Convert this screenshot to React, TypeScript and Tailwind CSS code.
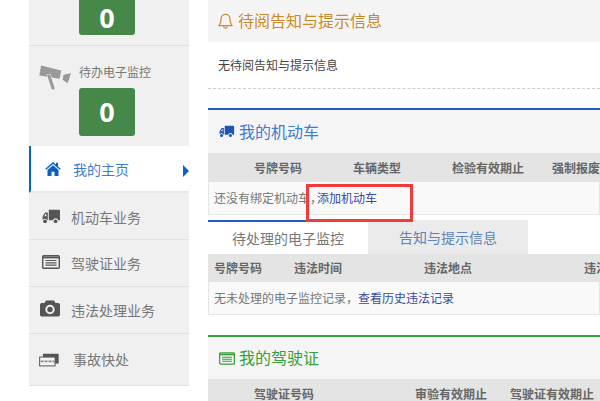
import React from "react";

const font = { fontFamily: '"Microsoft YaHei","Noto Sans CJK SC","Liberation Sans",sans-serif' };

function Truck({ className }: { className?: string }) {
  return (
    <svg viewBox="22 25 56 44" className={className} fill="currentColor">
      <path d="M42 27h30a3 3 0 0 1 3 3v28h-5a8.500 8.500 0 0 0-16 0H42z" />
      <path fillRule="evenodd" d="M39 35v23h-1a8 8 0 0 0-14-1V46l7-11zM28.500 46h6v-7h-2z" />
      <circle cx="31" cy="61" r="5.500" />
      <circle cx="62" cy="61" r="5.500" />
    </svg>
  );
}

function Card({ className }: { className?: string }) {
  return (
    <svg viewBox="0 0 18 14" className={className} fill="none" stroke="currentColor">
      <rect x="0.700" y="0.700" width="16.600" height="12.600" rx="1" strokeWidth="1.400" />
      <path d="M0.700 2.500h16.600" strokeWidth="1.800" />
      <path d="M3.500 5.500h11M3.500 7.800h11M3.500 10.100h11" strokeWidth="1.200" />
    </svg>
  );
}

function Home({ className }: { className?: string }) {
  return (
    <svg viewBox="0 0 16 14" className={className} fill="currentColor">
      <path d="M8 0 .3 6.800l.9 1L8 1.900l6.800 5.900.9-1L13 4.400V.8h-2v1.900z" />
      <path d="M8 3.300 2.500 8v6H6.500V9.800h3V14h4V8z" />
    </svg>
  );
}

function Camera({ className }: { className?: string }) {
  return (
    <svg viewBox="0 0 20 16" className={className} fill="currentColor">
      <path fillRule="evenodd" d="M6 0h8l1.500 2.500h2.700A1.800 1.800 0 0 1 20 4.300v9.900a1.800 1.800 0 0 1-1.800 1.800H1.800A1.800 1.800 0 0 1 0 14.200V4.300a1.800 1.800 0 0 1 1.800-1.800h2.700zm4 4.300a4.700 4.700 0 1 0 0 9.400 4.700 4.700 0 0 0 0-9.400z" />
      <circle cx="10" cy="9" r="2.700" />
    </svg>
  );
}

function Accident({ className }: { className?: string }) {
  return (
    <svg viewBox="12 26 61 40" className={className}>
      <rect x="24" y="27" width="48" height="30" fill="currentColor" />
      <rect x="14" y="37" width="47" height="27" fill="#f4f4f4" stroke="currentColor" strokeWidth="3" />
      <path d="M17 50h41" stroke="#888" strokeWidth="5" strokeDasharray="9 3" fill="none" />
    </svg>
  );
}

function Cctv({ className }: { className?: string }) {
  return (
    <svg viewBox="24 28 104 80" className={className} fill="currentColor">
      <path d="M33 32 93 47 88 72 28 62z" />
      <path d="M60 58 51 60 65 104 74 102z" stroke="#f0f0f0" strokeWidth="3" paintOrder="stroke" />
      <path d="M100 60 122 55 112 85 97 75z" />
    </svg>
  );
}

function Bell({ className }: { className?: string }) {
  return (
    <svg viewBox="0 0 16 17" className={className} fill="none" stroke="currentColor" strokeWidth="1.300">
      <path d="M8 1.500a4.700 4.700 0 0 0-4.700 4.700c0 4.300-1.800 6-2.300 7.300h14c-.5-1.300-2.300-3-2.300-7.300A4.700 4.700 0 0 0 8 1.500z" />
      <path d="M6 14a2 2 0 0 0 4 0" />
    </svg>
  );
}

function Sidebar() {
  return (
    <aside className="w-[160px] shrink-0 bg-[#f0f0f0] text-[#777] text-[14px]">
      <div className="h-[46px] border-b border-[#e0e0e0] pl-[50px]">
        <div className="w-[56px] h-[35px] bg-[#46874a] rounded-b-[3px] flex items-end justify-center text-white text-[27px] font-bold leading-[35px]" style={{ fontFamily: '"Open Sans",sans-serif' }}>
          0
        </div>
      </div>
      <div className="h-[100px]">
        <div className="flex h-[42px] pl-[9px] pt-[18px]">
          <Cctv className="w-[35px] h-[27px] text-[#999] shrink-0" />
          <span className="ml-[6px] mt-[1px] text-[12px] leading-[14px]">待办电子监控</span>
        </div>
        <div className="ml-[50px] w-[56px] h-[48px] bg-[#46874a] rounded-[3px] flex items-center justify-center text-white text-[27px] font-bold" style={{ fontFamily: '"Open Sans",sans-serif' }}>
          0
        </div>
      </div>
      <div className="h-[47px] bg-white border-l-2 border-[#0b63c9] border-b-2 border-b-[#e8e8e8] flex items-center pl-[14px] relative text-[#3e7cd0]">
        <Home className="w-[16px] h-[14px] text-[#0b5fc4]" />
        <span className="ml-[12px] mt-[2px]">我的主页</span>
        <span className="absolute right-0 top-[19px] w-0 h-0 border-y-[6px] border-y-transparent border-l-[6px] border-l-[#0b63c9]" />
      </div>
      <div className="h-[47px] pl-[13px] border-b border-[#e0e0e0] flex items-center">
        <Truck className="w-[19px] h-[15px] text-[#555]" />
        <span className="ml-[10px] mt-[2px]">机动车业务</span>
      </div>
      <div className="h-[47px] pl-[13px] border-b border-[#e0e0e0] flex items-center">
        <Card className="w-[18px] h-[14px] text-[#555] -mt-[3px]" />
        <span className="ml-[11px] mt-[1px]">驾驶证业务</span>
      </div>
      <div className="h-[47px] pl-[11px] border-b border-[#e0e0e0] flex items-center">
        <Camera className="w-[20px] h-[17px] text-[#555] -mt-[4px]" />
        <span className="ml-[11px] mt-[1px]">违法处理业务</span>
      </div>
      <div className="h-[52px] pl-[10px] border-b border-[#e0e0e0] flex items-center">
        <Accident className="w-[20px] h-[14px] text-[#555]" />
        <span className="ml-[14px]">事故快处</span>
      </div>
    </aside>
  );
}

function Main() {
  return (
    <main className="ml-[19px] flex-1 min-w-0 text-[12px] text-[#555]">
      <div className="h-[42px] bg-[#f4f4f4] flex items-center pl-[10px] text-[16px] text-[#c98a2b]">
        <Bell className="w-[15px] h-[16px] mr-[5px]" />
        <span className="-mt-[2px]">待阅告知与提示信息</span>
      </div>
      <div className="h-[47px] border-b border-dashed border-[#ccc] pt-[14px] pl-[10px] text-[#444]">无待阅告知与提示信息</div>

      <div className="mt-[19px] border-t-2 border-[#2159c5]">
        <div className="h-[43px] bg-[#f5f5f5] flex items-center pl-[11px] text-[16px] text-[#3e7cd0]">
          <Truck className="w-[16px] h-[13px] text-[#1f56b5] mr-[4px]" />
          <span className="-mt-[2px]">我的机动车</span>
        </div>
        <div className="h-[29px] bg-[#e4e4e4] flex items-center font-bold text-[#666] whitespace-nowrap overflow-hidden">
          <span className="ml-[46px]">号牌号码</span>
          <span className="ml-[51px]">车辆类型</span>
          <span className="ml-[51px]">检验有效期止</span>
          <span className="ml-[28px]">强制报废期止</span>
        </div>
        <div className="h-[33px] bg-[#f9f9f9] border-x border-b border-[#e4e4e4] flex items-center pl-[5px] text-[#777]">
          还没有绑定机动车，<span className="text-[#3a4aa0] ml-[-5px]">添加机动车</span>
        </div>
      </div>

      <div className="mt-[5px] flex h-[34px] w-[320px]">
        <div className="w-[160px] border-t-2 border-[#2159c5] bg-white flex items-center justify-center text-[14px] text-[#777]">待处理的电子监控</div>
        <div className="w-[160px] bg-[#ebebeb] flex items-center justify-center text-[14px] text-[#5b84b8]">告知与提示信息</div>
      </div>
      <div className="h-[28px] bg-[#e4e4e4] flex items-center font-bold text-[#666] pl-[6px] whitespace-nowrap overflow-hidden">
        <span>号牌号码</span>
        <span className="ml-[32px]">违法时间</span>
        <span className="ml-[82px]">违法地点</span>
        <span className="ml-[112px]">违法行为</span>
      </div>
      <div className="h-[33px] bg-[#f9f9f9] border-x border-b border-[#e4e4e4] flex items-center pl-[5px] text-[#777]">
        无未处理的电子监控记录，<span className="text-[#3a4aa0]">查看历史违法记录</span>
      </div>

      <div className="mt-[20px] border-t-2 border-[#35a03c]">
        <div className="h-[42px] bg-[#f5f5f5] flex items-center pl-[11px] text-[16px] text-[#35a03c]">
          <Card className="w-[16px] h-[13px] mr-[4px]" />
          <span className="-mt-[2px]">我的驾驶证</span>
        </div>
        <div className="h-[29px] bg-[#e4e4e4] flex items-center font-bold text-[#666] whitespace-nowrap overflow-hidden">
          <span className="ml-[46px]">驾驶证号码</span>
          <span className="ml-[101px]">审验有效期止</span>
          <span className="ml-[23px]">驾驶证有效期止</span>
        </div>
      </div>
    </main>
  );
}

export default function App() {
  return (
    <div className="w-[600px] h-[401px] overflow-hidden bg-white relative" style={font}>
      <div className="flex pl-[29px] items-start h-[401px]">
        <Sidebar />
        <Main />
      </div>
      <div className="absolute left-[306px] top-[184px] w-[107px] h-[38px] border-[3px] border-[#f33b3b]" />
    </div>
  );
}
